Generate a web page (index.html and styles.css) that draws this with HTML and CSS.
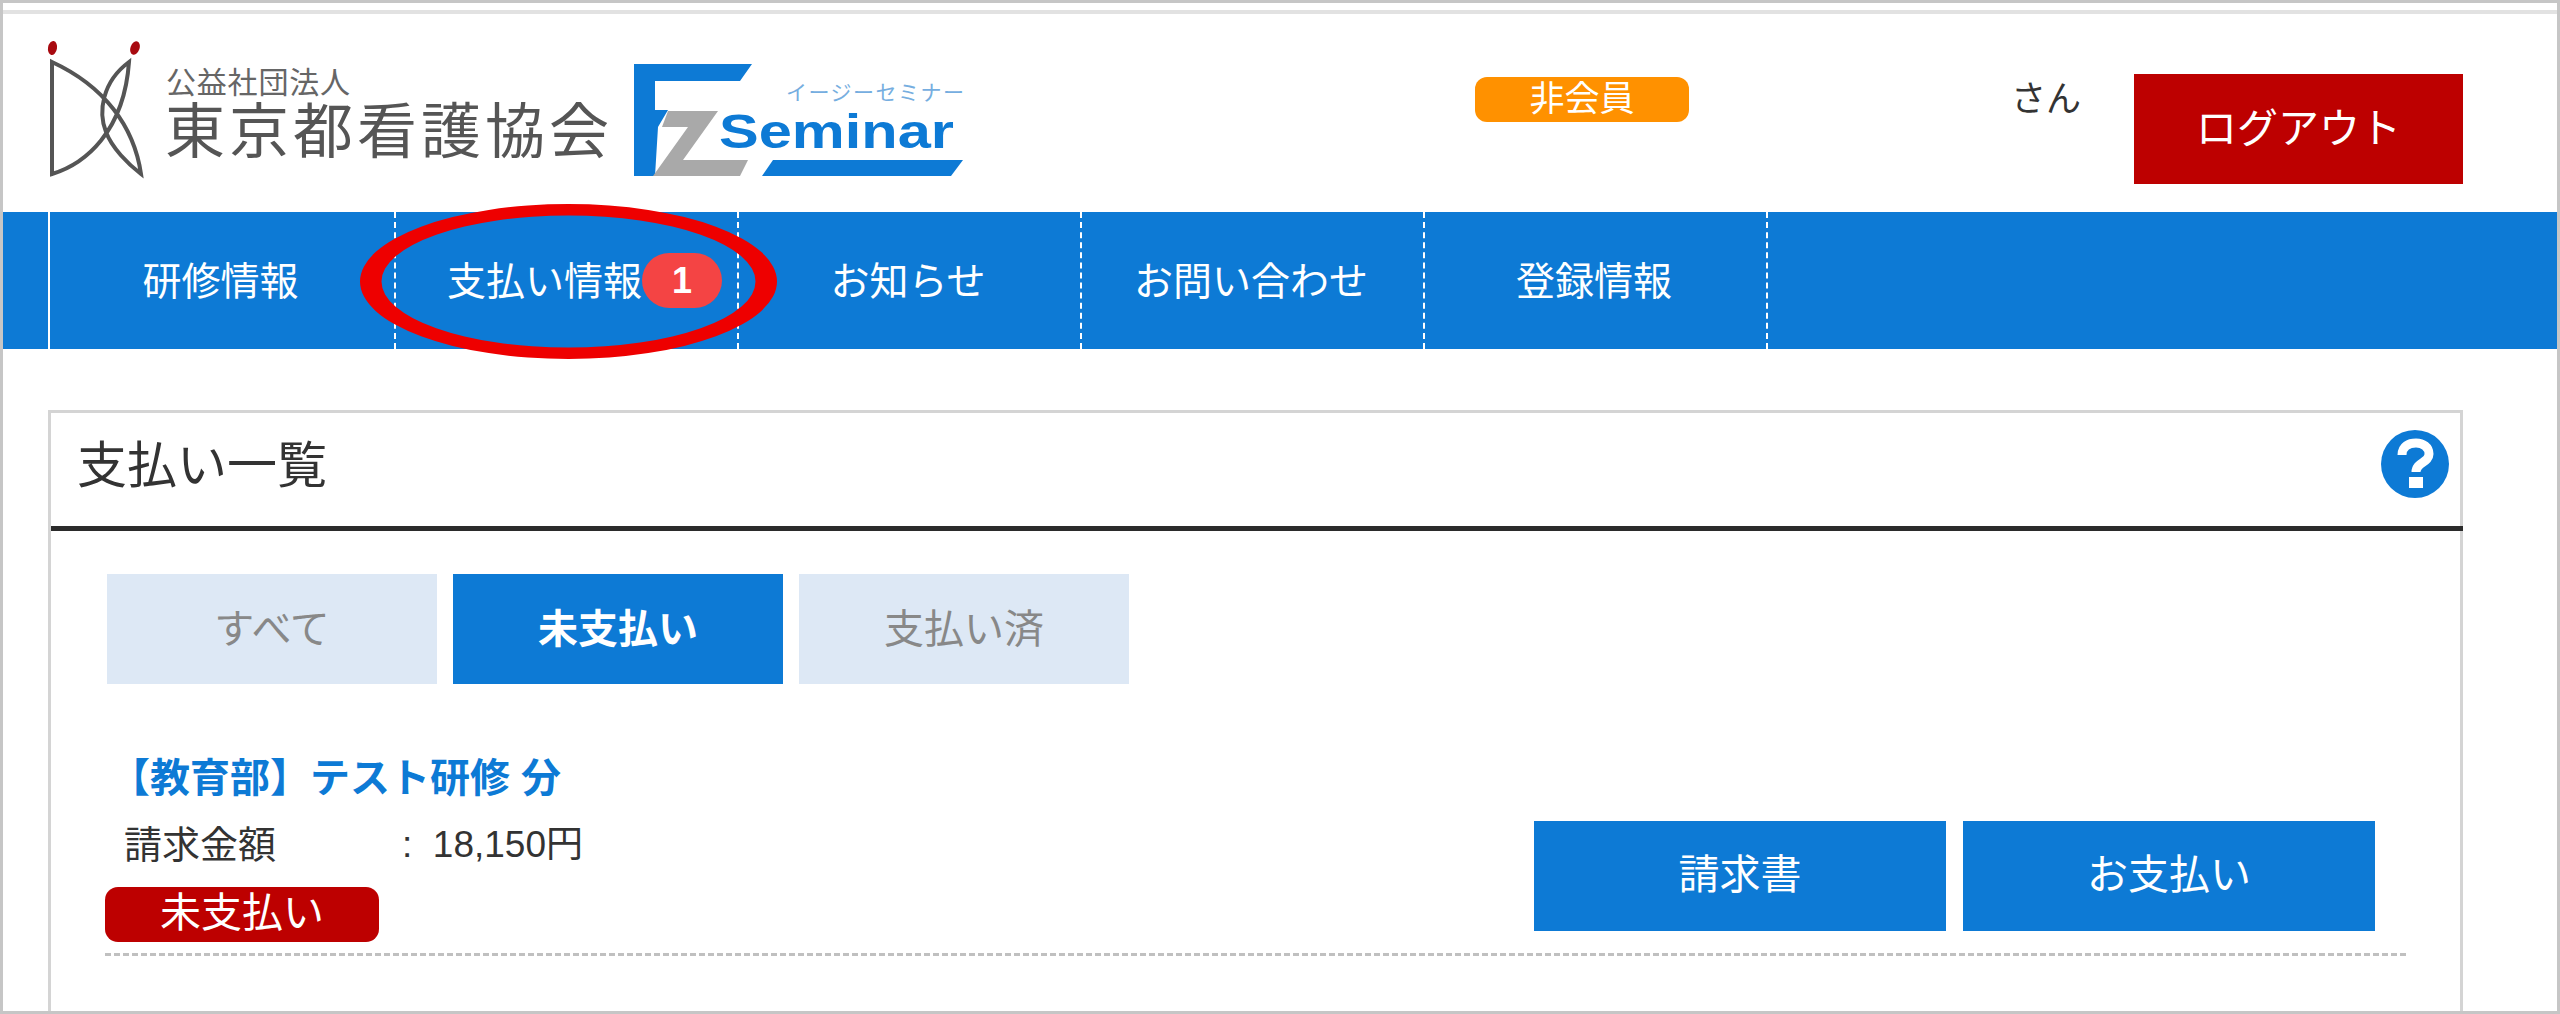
FILE: index.html
```html
<!DOCTYPE html>
<html lang="ja">
<head>
    <meta charset="UTF-8">
    <title>支払い一覧</title>
    <link rel="stylesheet" href="styles.css">
</head>
<body>
    <div class="frame">
        <div class="top-rule"></div>

        <header class="header">
            <svg class="logo" width="920" height="140" viewBox="45 40 920 140">
                <ellipse class="logo-dot" cx="52.5" cy="48" rx="4.5" ry="7" transform="rotate(10 52.5 48)"/>
                <ellipse class="logo-dot" cx="135" cy="48" rx="4.5" ry="7" transform="rotate(20 135 48)"/>
                <path class="logo-line" d="M52 62V174C85 164 124 132 129 62C102 82 98 112 106 132C112 148 128 164 141 174C134 126 104 86 52 62Z"/>
                <text class="logo-small" x="166" y="93" textLength="184">公益社団法人</text>
                <text class="logo-name" x="165" y="153" textLength="444">東京都看護協会</text>
                <polygon class="ez-blue" points="634,64 752,64 740,81 655,81 655,110 668,110 658,127 655,176 634,176"/>
                <polygon class="ez-gray" points="668,111 718,111 683,160 748,160 740,176 653,176 688,127 662,127"/>
                <polygon class="ez-blue" points="773,160 963,160 951,176 762,176"/>
                <text class="ez-word" x="719" y="148" textLength="235" lengthAdjust="spacingAndGlyphs">Seminar</text>
                <text class="ez-kana" x="786" y="100" textLength="178">イージーセミナー</text>
            </svg>
            <span class="member-badge">非会員</span>
            <span class="user-name">さん</span>
            <a class="logout-btn">ログアウト</a>
        </header>

        <nav class="nav">
            <a class="nav-item nav-item-first">研修情報</a>
            <a class="nav-item nav-item-pay">支払い情報<span class="nav-count">1</span></a>
            <a class="nav-item">お知らせ</a>
            <a class="nav-item">お問い合わせ</a>
            <a class="nav-item nav-item-last">登録情報</a>
        </nav>

        <section class="panel">
            <div class="panel-head">
                <h1 class="panel-title">支払い一覧</h1>
                <svg class="help-icon" width="68" height="68" viewBox="0 0 68 68">
                    <circle cx="34" cy="34" r="34" fill="#0d7ad5"/>
                    <path d="M21 25C21 16 28 13 35 13C42 13 48 17 48 24C48 33 35 32 35 42" fill="none" stroke="#fff" stroke-width="9"/>
                    <rect x="28" y="47" width="14" height="11" fill="#fff"/>
                </svg>
            </div>

            <div class="tabs">
                <a class="tab">すべて</a>
                <a class="tab tab-active">未支払い</a>
                <a class="tab">支払い済</a>
            </div>

            <div class="bill">
                <div class="bill-info">
                    <a class="bill-title">【教育部】テスト研修 分</a>
                    <div class="bill-row">
                        <span class="bill-label">請求金額</span>
                        <span class="bill-value">:&nbsp; 18,150円</span>
                    </div>
                    <span class="bill-status">未支払い</span>
                </div>
                <div class="bill-actions">
                    <a class="bill-btn">請求書</a>
                    <a class="bill-btn">お支払い</a>
                </div>
            </div>
        </section>

        <!-- 赤丸の注釈 -->
        <svg class="callout" width="417" height="155" viewBox="0 0 417 155">
            <path fill="#ee0000" fill-rule="evenodd" d="M0 77.5A208.5 77.5 0 1 1 417 77.5A208.5 77.5 0 1 1 0 77.5ZM21.5 77.5A187 66 0 1 0 395.5 77.5A187 66 0 1 0 21.5 77.5Z"/>
        </svg>
    </div>
</body>
</html>
```

FILE: styles.css
```css
* {
    margin: 0;
    padding: 0;
    box-sizing: border-box;
}

body {
    background: #fff;
    color: #333;
    font-family: "Liberation Sans", "Noto Sans CJK JP", sans-serif;
}

.frame {
    position: relative;
    height: 1014px;
    border: 3px solid #c6c6c6;
    overflow: hidden;
}

.top-rule {
    height: 4px;
    margin-top: 7px;
    background: #e2e2e2;
}

/* header */
.header {
    display: flex;
    align-items: flex-start;
    height: 198px;
}

.logo {
    flex: none;
    margin: 26px 0 0 42px;
}

.logo-dot {
    fill: #a80a10;
}

.logo-line {
    fill: none;
    stroke: #555;
    stroke-width: 4;
}

.logo-small {
    font-size: 30px;
    fill: #666;
}

.logo-name {
    font-size: 60px;
    fill: #555;
}

.ez-blue {
    fill: #0d7ad5;
}

.ez-gray {
    fill: #a9a9a9;
}

.ez-word {
    font-size: 49px;
    font-weight: bold;
    fill: #0d7ad5;
}

.ez-kana {
    font-size: 21px;
    fill: #76aee0;
}

.member-badge {
    width: 214px;
    height: 45px;
    margin: 63px 0 0 510px;
    background: #ff9100;
    border-radius: 12px;
    color: #fff;
    font-size: 35px;
    line-height: 43px;
    text-align: center;
}

.user-name {
    margin: 62px 0 0 322px;
    font-size: 35px;
    line-height: 46px;
}

.logout-btn {
    width: 329px;
    height: 110px;
    margin: 60px 0 0 53px;
    background: #bd0000;
    color: #fff;
    font-size: 41px;
    line-height: 110px;
    text-align: center;
}

/* nav */
.nav {
    display: flex;
    height: 137px;
    padding-left: 45px;
    background: #0d7ad5;
}

.nav-item {
    display: flex;
    align-items: center;
    justify-content: center;
    width: 343px;
    padding: 0 3px 5px 0;
    border-left: 2px dashed #fff;
    color: #fff;
    font-size: 39px;
}

.nav-item-first {
    width: 346px;
    border-left-style: solid;
}

.nav-item-last {
    width: 345px;
    border-right: 2px dashed #fff;
}

.nav-item-pay {
    justify-content: flex-start;
    padding-left: 51px;
}

.nav-count {
    width: 80px;
    height: 55px;
    margin-top: 5px;
    background: #f44444;
    border-radius: 28px;
    font-size: 36px;
    font-weight: bold;
    line-height: 55px;
    text-align: center;
}

/* panel */
.panel {
    width: 2415px;
    height: 662px;
    margin: 61px 0 0 45px;
    border: 3px solid #d4d4d4;
    border-bottom: none;
}

.panel-head {
    display: flex;
    align-items: center;
    justify-content: space-between;
    height: 118px;
    margin-right: -3px;
    padding: 0 14px 15px 26px;
    border-bottom: 5px solid #2b2b2b;
}

.panel-title {
    margin-bottom: 2px;
    font-size: 50px;
    font-weight: normal;
}

.help-icon {
    flex: none;
    margin-top: 3px;
}

.tabs {
    display: flex;
    gap: 16px;
    margin: 43px 0 0 56px;
}

.tab {
    width: 330px;
    height: 110px;
    background: #dde8f5;
    color: #888;
    font-size: 40px;
    line-height: 110px;
    text-align: center;
}

.tab-active {
    background: #0d7ad5;
    color: #fff;
    font-weight: bold;
}

.bill {
    display: flex;
    justify-content: space-between;
    width: 2301px;
    height: 196px;
    margin: 76px 0 0 54px;
    border-bottom: 3px dashed #c0c0c0;
}

.bill-info {
    display: flex;
    flex-direction: column;
    align-items: flex-start;
}

.bill-title {
    margin: -4px 0 0 5px;
    color: #0d7ad5;
    font-size: 40px;
    font-weight: bold;
    line-height: 44px;
}

.bill-row {
    display: flex;
    margin: 22px 0 0 19px;
    font-size: 38px;
    line-height: 46px;
}

.bill-label {
    width: 278px;
}

.bill-value {
    font-size: 37px;
}

.bill-status {
    width: 274px;
    height: 55px;
    margin-top: 19px;
    background: #bd0000;
    border-radius: 13px;
    color: #fff;
    font-size: 41px;
    line-height: 53px;
    text-align: center;
}

.bill-actions {
    display: flex;
    gap: 17px;
    margin: 61px 31px 0 0;
}

.bill-btn {
    width: 412px;
    height: 110px;
    background: #0d7ad5;
    color: #fff;
    font-size: 41px;
    line-height: 108px;
    text-align: center;
}

/* annotation over the nav */
.callout {
    position: absolute;
    left: 357px;
    top: 201px;
}
```
